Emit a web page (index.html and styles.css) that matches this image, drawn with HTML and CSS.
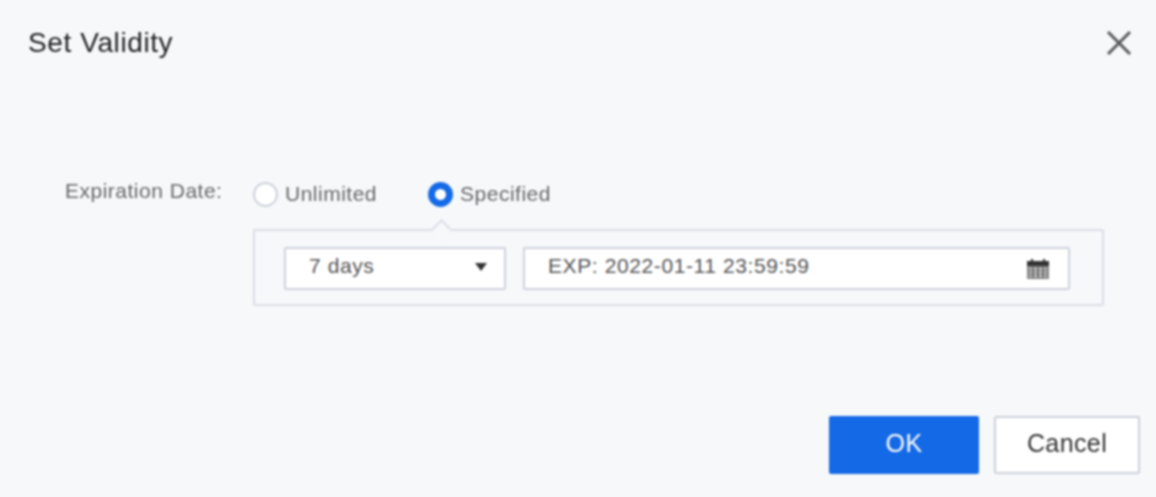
FILE: index.html
```html
<html lang="en">
<head>
    <meta charset="UTF-8">
    <title>Set Validity</title>
    <link rel="stylesheet" href="styles.css">
</head>
<body>
    <div class="dialog">
        <div class="dialog-header">
            <div class="dialog-title">Set Validity</div>
            <svg class="close-icon" viewBox="0 0 24 24" width="24" height="24">
                <path d="M1 1 L23 23 M23 1 L1 23" fill="none" stroke="#5a5a5a" stroke-width="3"/>
            </svg>
        </div>

        <div class="dialog-body">
            <div class="form-label">Expiration Date:</div>
            <div class="form-content">
                <div class="radio-group">
                    <label class="radio"><span class="radio-dot"></span>Unlimited</label>
                    <label class="radio"><span class="radio-dot checked"></span>Specified</label>
                </div>
                <div class="panel">
                    <span class="panel-arrow"></span>
                    <div class="select">
                        <span>7 days</span>
                        <span class="select-caret"></span>
                    </div>
                    <div class="date-input">
                        <span>EXP: 2022-01-11 23:59:59</span>
                        <svg class="calendar-icon" viewBox="0 0 24 22" width="24" height="22">
                            <path d="M1 3 H5 V1 H7 V3 H17 V1 H19 V3 H23 V8 H1 Z" fill="#333"/>
                            <rect x="1" y="8" width="22" height="13" fill="#8a8a8a"/>
                            <path d="M4 11 H20 M4 14.5 H20 M4 18 H20" stroke="#e4e4e4" stroke-width="1.4"/>
                            <path d="M7 9 V20 M12 9 V20 M17 9 V20" stroke="#555" stroke-width="1.4"/>
                        </svg>
                    </div>
                </div>
            </div>
        </div>

        <div class="dialog-footer">
            <button class="btn btn-primary">OK</button>
            <button class="btn">Cancel</button>
        </div>
    </div>
</body>
</html>
```

FILE: styles.css
```css
html, body {
    margin: 0;
    padding: 0;
    background-color: #f7f8fa;
}

.dialog {
    height: 497px;
    box-sizing: border-box;
    display: flex;
    flex-direction: column;
    font-family: 'Liberation Sans', Arial, sans-serif;
    filter: blur(0.8px);
}

.dialog-header {
    display: flex;
    justify-content: space-between;
    align-items: center;
    padding: 26px 25px 0 28px;
    height: 34px;
}

.dialog-title {
    font-size: 28px;
    letter-spacing: 0.6px;
    color: #222;
}

.close-icon {
    display: block;
}

.dialog-body {
    display: flex;
    padding: 120px 52px 0 65px;
}

.form-label {
    width: 188px;
    flex-shrink: 0;
    font-size: 21px;
    line-height: 22px;
    color: #666;
    letter-spacing: 0.5px;
}

.form-content {
    flex: 1;
}

.radio-group {
    display: flex;
    gap: 51px;
    height: 28px;
    align-items: center;
}

.radio {
    display: flex;
    align-items: center;
    gap: 7px;
    font-size: 21px;
    letter-spacing: 0.5px;
    color: #666;
}

.radio-dot {
    width: 25px;
    height: 25px;
    box-sizing: border-box;
    border: 2px solid #ccd1da;
    border-radius: 50%;
    background-color: #fff;
}

.radio-dot.checked {
    border: 7px solid #1469e6;
}

.panel {
    position: relative;
    margin-top: 21px;
    display: flex;
    gap: 17px;
    padding: 16px 32px 14px 29px;
    border: 2px solid #d9dde6;
    border-radius: 2px;
}

.panel-arrow {
    position: absolute;
    top: -9px;
    left: 179px;
    width: 13px;
    height: 13px;
    background-color: #f7f8fa;
    border-top: 2px solid #d9dde6;
    border-left: 2px solid #d9dde6;
    transform: rotate(45deg);
}

.select, .date-input {
    display: flex;
    align-items: center;
    justify-content: space-between;
    box-sizing: border-box;
    height: 43px;
    background-color: #fff;
    border: 2px solid #cdd2dc;
    border-radius: 2px;
    font-size: 21px;
    letter-spacing: 0.6px;
    color: #555;
}

.select span:first-child, .date-input span:first-child {
    margin-bottom: 5px;
}

.select {
    width: 222px;
    padding: 0 17px 0 23px;
}

.date-input {
    flex: 1;
    padding: 0 18px 0 23px;
}

.select-caret {
    width: 0;
    height: 0;
    margin-bottom: 4px;
    border-left: 6px solid transparent;
    border-right: 6px solid transparent;
    border-top: 8px solid #333;
}

.dialog-footer {
    margin-top: auto;
    display: flex;
    justify-content: flex-end;
    gap: 15px;
    padding: 0 16px 23px 0;
}

.btn {
    width: 146px;
    height: 58px;
    box-sizing: border-box;
    background-color: #fff;
    border: 2px solid #cbd0d9;
    border-radius: 2px;
    font-family: inherit;
    font-size: 25px;
    letter-spacing: 0.4px;
    color: #333;
    padding: 0 0 4px;
}

.btn-primary {
    width: 150px;
    background-color: #1469e6;
    border-color: #1469e6;
    color: #fff;
}
```
